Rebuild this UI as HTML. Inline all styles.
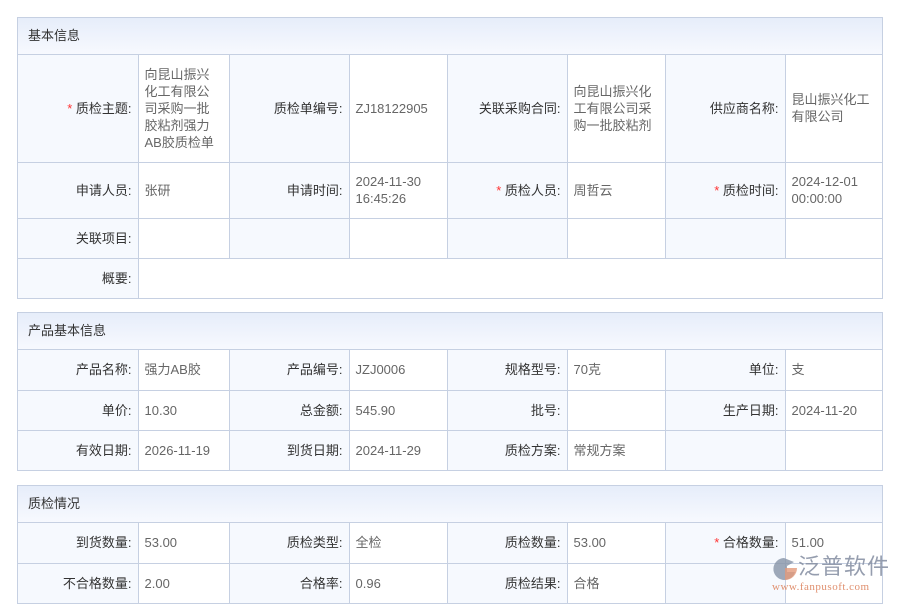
<!DOCTYPE html>
<html><head><meta charset="utf-8"><style>
*{margin:0;padding:0;box-sizing:border-box}
body{width:900px;height:600px;overflow:hidden;background:#fff;font-family:"Liberation Sans","Noto Sans CJK SC",sans-serif;font-size:13px;position:relative}
.sec{position:absolute;left:17px;width:866px;border:1px solid #c6d0e2}
.hd{height:37px;line-height:36px;padding-left:10px;color:#333;background:linear-gradient(#e6edfa,#f7f9fe);border-bottom:1px solid #c6d0e2}
table{border-collapse:collapse;table-layout:fixed;width:864px}
td{border:1px solid #c6d0e2;line-height:17px;vertical-align:middle;color:#666;padding:0 12px 0 6px}
tr td:first-child{border-left:none}
tr td:last-child{border-right:none;padding-right:8px}
tr:last-child td{border-bottom:none}
tr:first-child td{border-top:none}
td.l{background:#f6f9fe;color:#333;text-align:right;padding:0 6px 0 4px}
.r{color:#f33}
</style></head><body>
<div class="sec" style="top:17px">
<div class="hd">基本信息</div>
<table>
<colgroup><col style="width:120px"><col style="width:91px"><col style="width:120px"><col style="width:98px"><col style="width:120px"><col style="width:98px"><col style="width:120px"><col style="width:97px"></colgroup>
<tr style="height:107px"><td class="l"><span class="r">*</span> 质检主题:</td><td>向昆山振兴化工有限公司采购一批胶粘剂强力AB胶质检单</td><td class="l">质检单编号:</td><td>ZJ18122905</td><td class="l">关联采购合同:</td><td>向昆山振兴化工有限公司采购一批胶粘剂</td><td class="l">供应商名称:</td><td>昆山振兴化工有限公司</td></tr>
<tr style="height:56px"><td class="l">申请人员:</td><td>张研</td><td class="l">申请时间:</td><td>2024-11-30 16:45:26</td><td class="l"><span class="r">*</span> 质检人员:</td><td>周哲云</td><td class="l"><span class="r">*</span> 质检时间:</td><td>2024-12-01 00:00:00</td></tr>
<tr style="height:40px"><td class="l">关联项目:</td><td></td><td class="l"></td><td></td><td class="l"></td><td></td><td class="l"></td><td></td></tr>
<tr style="height:40px"><td class="l">概要:</td><td colspan="7"></td></tr>
</table></div>

<div class="sec" style="top:312px">
<div class="hd">产品基本信息</div>
<table>
<colgroup><col style="width:120px"><col style="width:91px"><col style="width:120px"><col style="width:98px"><col style="width:120px"><col style="width:98px"><col style="width:120px"><col style="width:97px"></colgroup>
<tr style="height:40px"><td class="l">产品名称:</td><td>强力AB胶</td><td class="l">产品编号:</td><td>JZJ0006</td><td class="l">规格型号:</td><td>70克</td><td class="l">单位:</td><td>支</td></tr>
<tr style="height:40px"><td class="l">单价:</td><td>10.30</td><td class="l">总金额:</td><td>545.90</td><td class="l">批号:</td><td></td><td class="l">生产日期:</td><td>2024-11-20</td></tr>
<tr style="height:40px"><td class="l">有效日期:</td><td>2026-11-19</td><td class="l">到货日期:</td><td>2024-11-29</td><td class="l">质检方案:</td><td>常规方案</td><td class="l"></td><td></td></tr>
</table></div>

<div class="sec" style="top:485px">
<div class="hd">质检情况</div>
<table>
<colgroup><col style="width:120px"><col style="width:91px"><col style="width:120px"><col style="width:98px"><col style="width:120px"><col style="width:98px"><col style="width:120px"><col style="width:97px"></colgroup>
<tr style="height:40px"><td class="l">到货数量:</td><td>53.00</td><td class="l">质检类型:</td><td>全检</td><td class="l">质检数量:</td><td>53.00</td><td class="l"><span class="r">*</span> 合格数量:</td><td>51.00</td></tr>
<tr style="height:40px"><td class="l">不合格数量:</td><td>2.00</td><td class="l">合格率:</td><td>0.96</td><td class="l">质检结果:</td><td>合格</td><td class="l"></td><td></td></tr>
</table></div>

<div style="position:absolute;left:770px;top:556px;width:30px;height:26px">
<svg width="30" height="26" viewBox="0 0 30 26"><path d="M14 2 A11 11 0 1 0 25 16 L17 16 L17 10 L24 6 Z" fill="#8793a8" opacity=".8"/><path d="M15 12 L27 12 A12 12 0 0 1 15 24 Z" fill="#e49a7a" opacity=".8"/></svg></div>
<div style="position:absolute;left:798px;top:553px;font-size:22px;color:#8a93a6;opacity:.9;letter-spacing:1px;line-height:28px">泛普软件</div>
<div style="position:absolute;left:772px;top:581px;font-size:11px;color:#e0906f;font-family:'Liberation Serif',serif;letter-spacing:.5px">www.fanpusoft.com</div>
</body></html>
